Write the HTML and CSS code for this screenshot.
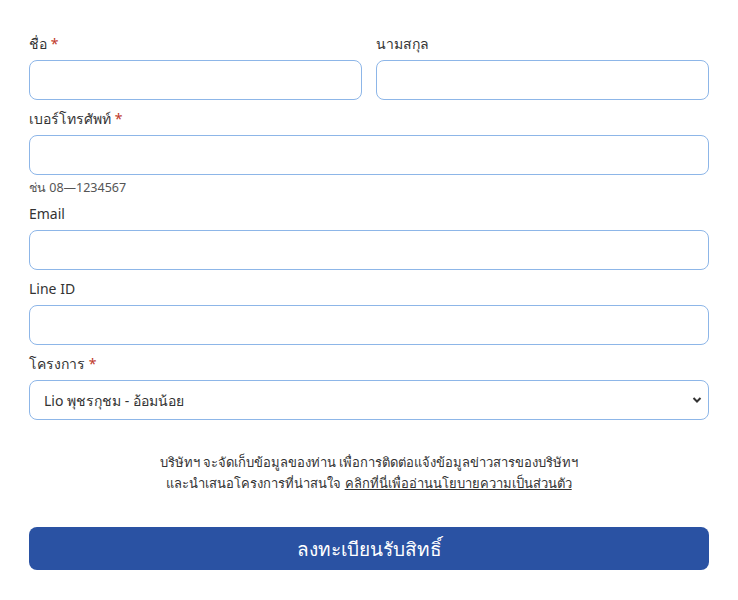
FILE: index.html
```html
<!DOCTYPE html>
<html lang="th">
<head>
  <meta charset="UTF-8">
  <meta name="viewport" content="width=device-width, initial-scale=1.0">
  <title>ลงทะเบียน</title>
  <link rel="stylesheet" href="styles.css">
</head>
<body>
  <!-- ฟอร์มลงทะเบียน -->
  <form class="register-form">
    <div class="row">
      <div class="field">
        <label>ชื่อ <span class="req">*</span></label>
        <input type="text" class="input">
      </div>
      <div class="field">
        <label>นามสกุล</label>
        <input type="text" class="input">
      </div>
    </div>

    <div class="field">
      <label>เบอร์โทรศัพท์ <span class="req">*</span></label>
      <input type="tel" class="input">
      <small class="hint">ช่น 08—1234567</small>
    </div>

    <div class="field">
      <label>Email</label>
      <input type="email" class="input">
    </div>

    <div class="field">
      <label>Line ID</label>
      <input type="text" class="input">
    </div>

    <div class="field">
      <label>โครงการ <span class="req">*</span></label>
      <select class="input select">
        <option>Lio พุชรกุชม - อ้อมน้อย</option>
      </select>
    </div>

    <p class="consent">
      บริษัทฯ จะจัดเก็บข้อมูลของท่าน เพื่อการติดต่อแจ้งข้อมูลข่าวสารของบริษัทฯ<br>
      และนำเสนอโครงการที่น่าสนใจ <a href="#">คลิกที่นี่เพื่ออ่านนโยบายความเป็นส่วนตัว</a>
    </p>

    <button type="button" class="submit">ลงทะเบียนรับสิทธิ์</button>
  </form>
</body>
</html>
```

FILE: styles.css
```css
/* Grundlayout */
body {
  margin: 0;
  background: #fff;
  font-family: "Noto Sans", "Open Sans", sans-serif;
  color: #333;
}
.register-form {
  padding: 34px 29px 20px;
}
/* zwei Spalten für Vor- und Nachname */
.row {
  display: flex;
  gap: 14px;
}
.row .field {
  flex: 1;
}
.field {
  margin-bottom: 9px;
}
.field label {
  display: block;
  height: 20px;
  font-size: 14px;
  line-height: 20px;
  margin-bottom: 6px;
  color: #333;
}
.req {
  color: #c0392b;
}
/* Eingabefelder */
.input {
  display: block;
  box-sizing: border-box;
  width: 100%;
  height: 40px;
  border: 1px solid #8db6e8;
  border-radius: 8px;
  background: #fff;
  font-family: inherit;
  font-size: 14px;
  padding: 0 14px;
  color: #333;
}
.select {
  appearance: none;
  background-image: url("data:image/svg+xml;utf8,<svg xmlns='http://www.w3.org/2000/svg' width='10' height='8' viewBox='0 0 10 8'><path d='M1.5 2 L5 5.5 L8.5 2' fill='none' stroke='%23333' stroke-width='2'/></svg>");
  background-repeat: no-repeat;
  background-position: right 6px center;
}
.hint {
  display: block;
  height: 15px;
  font-size: 12.5px;
  line-height: 15px;
  margin-top: 5px;
  color: #555;
}
/* Hinweistext */
.consent {
  height: 42px;
  margin: 32px 0 33px;
  text-align: center;
  font-size: 13px;
  line-height: 21px;
  color: #333;
}
.consent a {
  color: #333;
  text-decoration: underline;
}
/* Absenden-Button */
.submit {
  display: block;
  width: 100%;
  height: 43px;
  border: none;
  border-radius: 8px;
  background: #2a52a3;
  color: #fff;
  font-family: inherit;
  font-size: 19px;
  cursor: pointer;
}
```
